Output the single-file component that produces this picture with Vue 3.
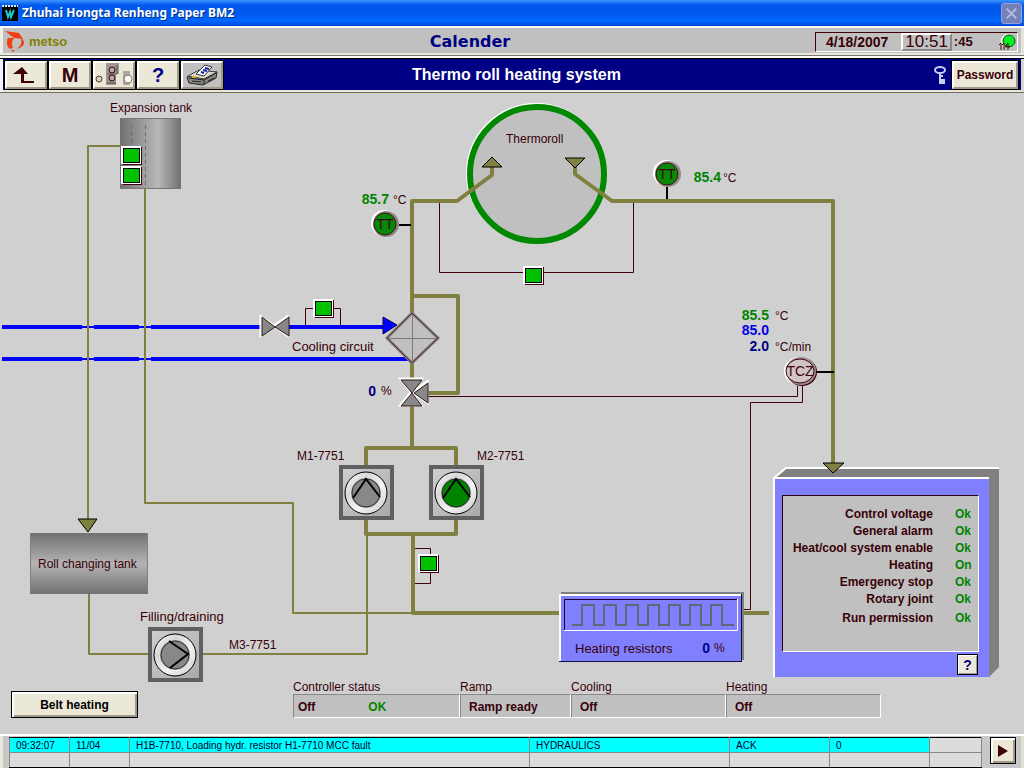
<script setup>
const tabs = ['up', 'm', 'machine', 'help', 'print']
const labels = { up: 'Up one level', m: 'Menu', machine: 'Machine overview', help: 'Help', print: 'Print' }

const indicators = [
  [131, 155], [131, 175], [323, 308], [533, 275], [428, 563]
]

const pumps = [
  { x: 366, y: 492, on: false, turn: 0 },
  { x: 456, y: 492, on: true, turn: 0 },
  { x: 175, y: 654, on: false, turn: 90 }
]

const checks = [
  ['Control voltage', 'Ok'],
  ['General alarm', 'Ok'],
  ['Heat/cool system enable', 'Ok'],
  ['Heating', 'On'],
  ['Emergency stop', 'Ok'],
  ['Rotary joint', 'Ok'],
  ['Run permission', 'Ok']
]

const fields = [
  { key: 'controller', title: 'Controller status', value: 'Off', state: 'OK' },
  { key: 'ramp', title: 'Ramp', value: 'Ramp ready' },
  { key: 'cooling', title: 'Cooling', value: 'Off' },
  { key: 'heating', title: 'Heating', value: 'Off' }
]

const alarm = ['09:32:07', '11/04', 'H1B-7710, Loading hydr. resistor H1-7710 MCC fault', 'HYDRAULICS', 'ACK', '0']

const wave = 'M572 625h10' + 'v-20h12v20h10'.repeat(3) + 'v-20h11v20h10'.repeat(3) + 'v-20h11v20h12'
</script>

<template>
  <div class="page">
    <header class="titlebar">
      <svg class="app-icon" viewBox="0 0 16 16" aria-hidden="true">
        <rect y="1" width="16" height="15" fill="#000" />
        <path d="M0 1h16" stroke="#d8e8f0" stroke-width="2" stroke-dasharray="2 1" />
        <path d="M4 5l2 7 2-5 1 5 3-7" fill="none" stroke="#20c8c8" stroke-width="2" />
      </svg>
      <span class="caption">Zhuhai Hongta Renheng Paper BM2</span>
      <button class="close" aria-label="Close">
        <svg viewBox="0 0 20 20"><path d="M5 5l10 10M15 5L5 15" stroke="#b4b8dc" stroke-width="2" /></svg>
      </button>
    </header>

    <div class="brandbar">
      <div class="brand">
        <svg viewBox="0 0 22 24" aria-hidden="true">
          <path d="M1 1l14 2 4 6-9-1z" fill="#f04010" />
          <path d="M4 8h6c-2 3-3 6-1 10l-3 1C3 17 2 12 4 8z" fill="#f04010" />
          <path d="M17 8c5 3 4 9-4 11c4-3 5-7 4-11z" fill="#f04010" />
          <path d="M7 20h4l-2 2z" fill="#f04010" />
        </svg>
        <span>metso</span>
      </div>
      <h1>Calender</h1>
      <div class="clock">
        <span class="date">4/18/2007</span>
        <span class="time">10:51</span>
        <span class="sec">:45</span>
        <svg viewBox="0 0 20 18" aria-hidden="true">
          <circle cx="11" cy="8" r="7" fill="#fff" />
          <circle cx="12" cy="8" r="6" fill="#00f020" stroke="#104010" />
          <path d="M4 10v7M2 12l2-2M7 10v7M5 12l2-2M11 10v7M11 10l-3 4h5" fill="none" stroke="#401010" />
        </svg>
      </div>
    </div>

    <nav class="toolbar">
      <button v-for="t in tabs" :key="t" :class="['tool', t]" :aria-label="labels[t]">
        <svg v-if="t === 'up'" viewBox="0 0 38 24"><path d="M6 11l9-7 6 7h-4v7h10v2H14v-9z" fill="#400008" /></svg>
        <span v-else-if="t === 'm'">M</span>
        <svg v-else-if="t === 'machine'" viewBox="0 0 38 24">
          <path d="M11 0h13v11h-3v11H11z" fill="#a09890" />
          <path d="M28 8h7v14h-7z" fill="#a8a8a0" />
          <circle cx="4" cy="16" r="3" fill="#d8d0c0" stroke="#504030" />
          <circle cx="17" cy="7" r="3" fill="#b8a8a0" stroke="#400008" />
          <circle cx="17" cy="15" r="3" fill="#b8a8a0" stroke="#400008" />
          <path d="M12 11h10V2M12 20h9" fill="none" stroke="#505050" />
          <circle cx="33" cy="16" r="4" fill="#fff" stroke="#807870" />
        </svg>
        <span v-else-if="t === 'help'">?</span>
        <svg v-else viewBox="0 0 38 24">
          <path d="M4 14l12-6 18 1-1 6-13 7-14-2z" fill="#888880" stroke="#202020" />
          <path d="M5 13l11-6 18 2-13 7z" fill="#d8d8d0" stroke="#404040" />
          <path d="M13 11l9-9 7 2-8 9z" fill="#fff" stroke="#303030" />
          <path d="M20 7l4 1M22 5l4 1M18 9l3 1" stroke="#1820a0" stroke-width="2" />
          <path d="M6 15l15 2 12-7M21 17v4M9 18l9 1M25 18l6-3" fill="none" stroke="#202020" />
          <path d="M9 14h4" stroke="#d8b020" stroke-width="2" />
        </svg>
      </button>
      <h2>Thermo roll heating system</h2>
      <svg class="key" viewBox="0 0 14 20" aria-hidden="true">
        <ellipse cx="7" cy="5" rx="5" ry="3" fill="none" stroke="#c8d0f0" stroke-width="2" />
        <path d="M6 8h2v11H6zM8 14h4v5H8zM8 10h2v2H8z" fill="#c8d0f0" />
      </svg>
      <button class="password">Password</button>
    </nav>

    <main>
      <svg class="process" viewBox="0 93 1024 587">
        <defs>
          <linearGradient id="tankH">
            <stop offset="0" stop-color="#707070" /><stop offset=".62" stop-color="#b8b8b8" /><stop offset="1" stop-color="#707070" />
          </linearGradient>
          <linearGradient id="tankV" x2="0" y2="1">
            <stop offset="0" stop-color="#707070" /><stop offset=".5" stop-color="#b4b4b4" /><stop offset="1" stop-color="#707070" />
          </linearGradient>
          <linearGradient id="ring" x2="1" y2="1">
            <stop offset="0" stop-color="#ffffff" /><stop offset=".3" stop-color="#d8d8d8" /><stop offset=".6" stop-color="#f4f4f4" /><stop offset="1" stop-color="#c8c8c8" />
          </linearGradient>
          <linearGradient id="plate" x2="1" y2="1">
            <stop offset="0" stop-color="#d0d0d0" /><stop offset="1" stop-color="#a8a8a8" />
          </linearGradient>
        </defs>

        <!-- tanks -->
        <rect x="120" y="118" width="61" height="71" fill="url(#tankH)" />
        <path d="M120 118.500h61M120 188.500h61" stroke="#787878" />
        <path d="M131.500 125v20M145.500 125v63" stroke="#70704c" stroke-dasharray="4 3" />
        <rect x="30" y="533" width="118" height="61" fill="url(#tankV)" />
        <path d="M30.500 533v61M147.500 533v61" stroke="#808080" />

        <!-- cooling water -->
        <g stroke="#0000ff" fill="none">
          <path d="M2 327h80M94 327h45M151 327h111M289 327h95M2 359h80M94 359h45M151 359h257" stroke-width="4" />
          <path d="M82 327h12M139 327h12M82 359h12M139 359h12" stroke-width="2" />
        </g>
        <path d="M383 317v17l14-9z" fill="#0000ff" stroke="#000060" />

        <!-- thin pipes -->
        <g class="pipe thin">
          <path d="M121 146H88V520" />
          <path d="M145 188V503H293V613H412" />
          <path d="M89 594V654H149M202 654H367V534" />
        </g>

        <!-- roll -->
        <circle cx="536" cy="173" r="67" fill="none" stroke="#fff" stroke-width="6" />
        <circle cx="537" cy="174" r="67" fill="#c0c0c0" stroke="#008800" stroke-width="6" />

        <!-- signal lines -->
        <g class="signal">
          <path d="M439.500 203V272.500H633.500V203" />
          <path d="M305.500 325V308.500H340.500V325" />
          <path d="M415 548.500H430.500V583.500H415" />
          <path d="M428 396.500H797.500V386" />
          <path d="M802.500 386V402.500H750.500V609.500H742" />
        </g>

        <!-- main pipes -->
        <g class="pipe">
          <path d="M412 314V201H457L492 175V167" />
          <path d="M575 167V174L612 201H833V464" />
          <path d="M412 296H458V393H428" />
          <path d="M412 362V382M412 405V448M366 466V448H456V466" />
          <path d="M366 519V534H456V519M413 534V613H560M743 613H769" />
        </g>
        <g fill="#808040" stroke="#000">
          <path d="M482 167h20l-10-10zM565 158h20l-10 10zM78 519h19l-9 13z" />
        </g>

        <!-- instruments -->
        <path d="M398 225h13M667 187v12M816 372h18" stroke="#000" stroke-width="2" />
        <g v-for="p in [[385, 224], [667, 174]]" :key="p[0]">
          <circle :cx="p[0] - 1" :cy="p[1] - 1" r="13" fill="#fff" />
          <circle :cx="p[0] + 1" :cy="p[1]" r="13" fill="#908888" />
          <circle :cx="p[0]" :cy="p[1]" r="11" fill="#088808" stroke="#401010" />
          <text class="tag" :x="p[0]" :y="p[1] + 5">TT</text>
        </g>
        <ellipse cx="799" cy="371" rx="15" ry="14" fill="#fff" />
        <ellipse cx="802" cy="372" rx="15" ry="14" fill="#400008" />
        <ellipse cx="801" cy="371" rx="15" ry="14" fill="#989090" />
        <ellipse cx="800" cy="371" rx="14" ry="12" fill="#d0c4c4" stroke="#400008" />
        <text class="tag" x="800" y="376">TCZ</text>

        <!-- exchanger and valves -->
        <path d="M412 313l26 25-26 25-25-25z" fill="#c0c0c0" stroke="#887c7c" stroke-width="3" />
        <path d="M412 313l26 25-26 25-25-25z" fill="none" stroke="#403434" />
        <path d="M412.500 314v48M388 338.500h49" stroke="#807878" />
        <g stroke="#fff" stroke-width="3" fill="#fff">
          <path d="M261 317v18l13-9zM287 317l-13 9 13 9z" />
          <path d="M401 379h20l-10 13zM401 405l10-13 10 13zM427 382v20l-14-10z" />
        </g>
        <g fill="#888" stroke="#301818">
          <path d="M262 317v19l13-9zM289 317l-14 10 14 9z" />
          <path d="M401 380h21l-10 13zM401 406l11-13 10 13zM428 383v20l-14-10z" />
        </g>

        <!-- level and flow switches -->
        <g v-for="(p, i) in indicators" :key="'i' + i">
          <rect :x="p[0] - 8" :y="p[1] - 8" width="19" height="18" fill="#400008" />
          <rect :x="p[0] - 10" :y="p[1] - 9" width="20" height="18" fill="#fff" />
          <rect :x="p[0] - 8" :y="p[1] - 7" width="17" height="15" fill="#000" />
          <rect :x="p[0] - 7" :y="p[1] - 6" width="15" height="13" fill="#00c000" />
        </g>

        <!-- pumps -->
        <g v-for="(p, i) in pumps" :key="'p' + i">
          <rect :x="p.x - 25" :y="p.y - 25" width="51" height="51" fill="url(#plate)" stroke="#606060" stroke-width="4" />
          <circle :cx="p.x" :cy="p.y + 1" r="21" fill="url(#ring)" stroke="#000" />
          <circle :cx="p.x" :cy="p.y + 1" r="15" fill="#a0a0a0" />
          <circle :cx="p.x" :cy="p.y + 1" r="14" :fill="p.on ? '#008400' : '#888888'" stroke="#303030" />
          <path
            :transform="`rotate(${p.turn} ${p.x} ${p.y})`"
            :d="`M${p.x - 13} ${p.y + 6}L${p.x} ${p.y - 13}L${p.x + 14} ${p.y + 5}`"
            fill="none" stroke="#000" stroke-width="2"
          />
        </g>

        <!-- heating resistors -->
        <rect x="561" y="592" width="183" height="68" fill="#808080" />
        <rect x="559" y="594" width="183" height="68" fill="#101040" />
        <rect x="559" y="594" width="182" height="67" fill="#fff" />
        <rect x="561" y="596" width="180" height="65" fill="#8080ff" />
        <path d="M564.500 631V599.500H737" fill="none" stroke="#200030" />
        <path d="M564 630.500H737.500V599" fill="none" stroke="#fff" />
        <path :d="wave" fill="none" stroke="#606878" stroke-width="2" />

        <!-- status cabinet -->
        <path d="M774 478l12-10h213v199l-10 10V478z" fill="#808080" />
        <path d="M774 478l12-10h213" fill="none" stroke="#fff" stroke-width="2" />
        <rect x="773" y="477" width="216" height="200" fill="#fff" />
        <rect x="775" y="479" width="214" height="198" fill="#8080ff" />
        <path d="M823 463h21l-11 10z" fill="#808040" stroke="#000" />
        <foreignObject x="782" y="495" width="197" height="158">
          <div class="checks">
            <table>
              <tbody>
                <tr v-for="c in checks" :key="c[0]">
                  <th scope="row">{{ c[0] }}</th>
                  <td>{{ c[1] }}</td>
                </tr>
              </tbody>
            </table>
          </div>
        </foreignObject>
        <foreignObject x="957" y="654" width="21" height="21">
          <button class="info" aria-label="Status help">?</button>
        </foreignObject>

        <!-- captions -->
        <g class="label">
          <text x="110" y="112">Expansion tank</text>
          <text x="506" y="143">Thermoroll</text>
          <text class="wide" x="292" y="351">Cooling circuit</text>
          <text x="297" y="460">M1-7751</text>
          <text x="477" y="460">M2-7751</text>
          <text x="38" y="568">Roll changing tank</text>
          <text class="wide" x="140" y="621">Filling/draining</text>
          <text x="229" y="649">M3-7751</text>
          <text class="wide" x="575" y="653">Heating resistors</text>
          <text x="393" y="204">°C</text>
          <text x="723" y="182">°C</text>
          <text x="775" y="320">°C</text>
          <text x="775" y="351">°C/min</text>
          <text x="381" y="395">%</text>
          <text x="714" y="652">%</text>
        </g>
        <g class="value">
          <text class="ok" x="389" y="204">85.7</text>
          <text class="ok" x="721" y="182">85.4</text>
          <text class="ok" x="769" y="320">85.5</text>
          <text class="set" x="769" y="335">85.0</text>
          <text x="769" y="351">2.0</text>
          <text x="376" y="396">0</text>
          <text x="710" y="653">0</text>
        </g>
      </svg>

      <section class="summary">
        <button class="belt">Belt heating</button>
        <dl>
          <div v-for="f in fields" :key="f.key" :class="['field', f.key]">
            <dt>{{ f.title }}</dt>
            <dd><span>{{ f.value }}</span><span v-if="f.state" class="state">{{ f.state }}</span></dd>
          </div>
        </dl>
      </section>
    </main>

    <footer class="alarms">
      <table>
        <colgroup>
          <col class="c1"><col class="c2"><col><col class="c4"><col class="c5"><col class="c6"><col class="c7">
        </colgroup>
        <tbody>
          <tr class="active"><td v-for="a in alarm" :key="a">{{ a }}</td><td class="blank"></td></tr>
          <tr><td v-for="n in 7" :key="n"></td></tr>
        </tbody>
      </table>
      <button class="next" aria-label="Next alarm">
        <svg viewBox="0 0 10 12"><path d="M0 0l10 6-10 6z" fill="#400008" /></svg>
      </button>
    </footer>
  </div>
</template>

<style>
body {
  background: #d0d0d0;
}
</style>

<style scoped>
* {
  box-sizing: border-box;
}
.page {
  display: flex;
  flex-direction: column;
  min-height: 100vh;
  background: #d0d0d0;
  color: #380008;
  font: 12px/14px "Liberation Sans", Arial, sans-serif;
}
h1, h2, dl, dd {
  margin: 0;
}
button {
  padding: 0;
  border-radius: 0;
  color: inherit;
  font: inherit;
}
.titlebar {
  display: flex;
  align-items: center;
  height: 26px;
  padding: 0 2px;
  background: linear-gradient(#3c94fc, #0058ee 20%, #0058ec 50%, #0068ff 80%, #0048d8);
}
.app-icon {
  width: 16px;
  height: 16px;
}
.caption {
  flex: 1;
  margin-left: 4px;
  color: #fff;
  font: 700 12px/20px "Noto Sans", sans-serif;
  text-shadow: 1px 1px #003088;
}
.close {
  width: 21px;
  height: 21px;
  border: 1px solid #98a0d8;
  border-radius: 3px;
  background: #7480b8;
}
.close svg {
  display: block;
}
.brandbar {
  display: grid;
  grid-template-columns: 1fr auto 1fr;
  align-items: center;
  height: 30px;
  padding: 0 6px 0 4px;
  border-top: 2px solid #fffff4;
  border-bottom: 1px solid #787878;
  background: #c0c0c0;
  box-shadow: inset 0 -2px #e8e8dc, inset 3px 0 #f0f0e8, inset -3px 0 #e4e4d8;
}
.brand {
  display: flex;
  align-items: center;
  gap: 3px;
  color: #808000;
  font-size: 13px;
  font-weight: 700;
}
.brand svg {
  width: 22px;
  height: 24px;
}
h1 {
  margin-right: 82px;
  color: #000084;
  font: 700 16px/20px "DejaVu Sans", sans-serif;
}
.clock {
  display: flex;
  align-items: center;
  justify-self: end;
  width: 203px;
  height: 20px;
  padding-left: 10px;
  border: 1px solid;
  border-color: #400008 #fff #fff #400008;
  font-size: 14px;
  font-weight: 700;
  white-space: nowrap;
}
.time {
  margin-left: 13px;
  padding: 0 2px;
  border: 2px solid;
  border-color: #fff #888 #888 #fff;
  font: 17px/14px "Liberation Sans", Arial, sans-serif;
}
.sec {
  margin-left: 2px;
  font-size: 13px;
}
.clock svg {
  width: 20px;
  height: 18px;
  margin-left: auto;
}
.toolbar {
  display: flex;
  align-items: center;
  gap: 2px;
  height: 37px;
  padding: 1px 6px 2px 5px;
  border-top: 2px solid #fff;
  border-bottom: 1px solid #707060;
  background: #000084;
  box-shadow: inset 0 1px #000, inset 3px 0 #f4f4ec, inset -3px 0 #d8d8cc, inset 0 -2px #ece8d8;
}
.tool, .password {
  height: 28px;
  border: 2px solid;
  border-color: #fff #a09888 #a09888 #fff;
  background: #ece8d8;
  box-shadow: 0 0 0 1px #000;
}
.tool {
  width: 42px;
  font-size: 20px;
  font-weight: 700;
}
.tool svg {
  display: block;
  width: 38px;
  height: 24px;
}
.tool.help {
  color: #000084;
}
.tool.print {
  background: #c0c0c0;
}
h2 {
  flex: 1;
  padding-right: 123px;
  color: #fff;
  font-size: 16px;
  line-height: 20px;
  text-align: center;
}
.key {
  width: 14px;
  height: 20px;
  margin-right: 3px;
}
.password {
  width: 66px;
  padding: 0 2px;
  font-weight: 700;
}
main {
  flex: 1;
}
.process {
  display: block;
  width: 100%;
  overflow: visible;
}
.pipe {
  fill: none;
  stroke: #808040;
  stroke-width: 4px;
  stroke-linejoin: round;
}
.pipe.thin {
  stroke-width: 2px;
}
.signal {
  fill: none;
  stroke: #400008;
}
.tag {
  fill: #400008;
  font-size: 14px;
  text-anchor: middle;
}
.label {
  fill: #380008;
  font-size: 12px;
}
.label .wide {
  font-size: 13px;
}
.value {
  fill: #000084;
  font-size: 14px;
  font-weight: 700;
  text-anchor: end;
}
.value .ok {
  fill: #008400;
}
.value .set {
  fill: #0000e8;
}
.checks {
  height: 157px;
  padding-top: 10px;
  border: 1px solid;
  border-color: #300010 #fff #fff #300010;
  background: #c0c0c0;
}
.checks table {
  width: 100%;
  border-collapse: collapse;
}
.checks th, .checks td {
  height: 17px;
  padding: 0;
  font-weight: 700;
  line-height: 17px;
}
.checks th {
  text-align: right;
}
.checks tr:last-child > * {
  padding-top: 2px;
}
.checks td {
  width: 45px;
  padding-left: 22px;
  color: #008400;
}
.info {
  display: block;
  width: 21px;
  height: 21px;
  border: 1px solid #000;
  background: #ece8d8;
  box-shadow: inset 1px 1px #fff, inset -1px -1px #a09888;
  color: #000084;
  font-size: 14px;
  font-weight: 700;
}
.summary {
  display: flex;
  align-items: flex-end;
  gap: 155px;
  padding: 0 143px 0 11px;
}
.belt {
  width: 127px;
  height: 27px;
  border: 1px solid #000;
  background: #ece8d8;
  box-shadow: inset 2px 2px #fff, inset -2px -2px #a09888;
  color: #000;
  font-weight: 700;
}
dl {
  display: flex;
  flex: 1;
}
.field {
  flex: 155 1 0;
}
.controller {
  flex-grow: 167;
}
.ramp {
  flex-grow: 111;
}
dt {
  line-height: 14px;
}
dd {
  display: flex;
  height: 24px;
  padding-left: 8px;
  border: 1px solid;
  border-color: #888 #fff #fff #888;
  background: #c0c0c0;
  font-weight: 700;
  line-height: 24px;
}
.controller dd {
  padding-left: 4px;
}
.state {
  margin-left: 53px;
  color: #008400;
}
.alarms {
  display: flex;
  align-items: flex-start;
  gap: 8px;
  height: 34px;
  padding: 2px 8px 0 9px;
  border-top: 1px solid #fffff0;
  background: #c8c8c8;
  box-shadow: inset 0 1px #fff, inset 3px 0 #e8e8dc, inset -3px 0 #e0e0d0;
}
.alarms table {
  flex: 1;
  width: 100%;
  border: 1px solid #000;
  border-collapse: collapse;
  table-layout: fixed;
  background: #dcdcdc;
  color: #000030;
  font-size: 10px;
}
.alarms td {
  height: 15px;
  padding: 0 0 0 6px;
  border: 1px solid #888;
  line-height: 13px;
  white-space: nowrap;
}
.alarms tr:first-child td {
  border-top-color: #000;
}
.alarms tr:last-child td {
  border-bottom-color: #000;
}
.active td {
  background: #00ffff;
}
.active .blank {
  background: #dcdcdc;
}
.c1 { width: 60px; }
.c2 { width: 60px; }
.c4 { width: 200px; }
.c5 { width: 100px; }
.c6 { width: 100px; }
.c7 { width: 52px; }
.next {
  display: grid;
  place-items: center;
  width: 26px;
  height: 27px;
  border: 1px solid #000;
  background: #ece8d8;
  box-shadow: inset 2px 2px #fff, inset -2px -2px #a09888;
}
.next svg {
  width: 10px;
  height: 12px;
}
</style>
